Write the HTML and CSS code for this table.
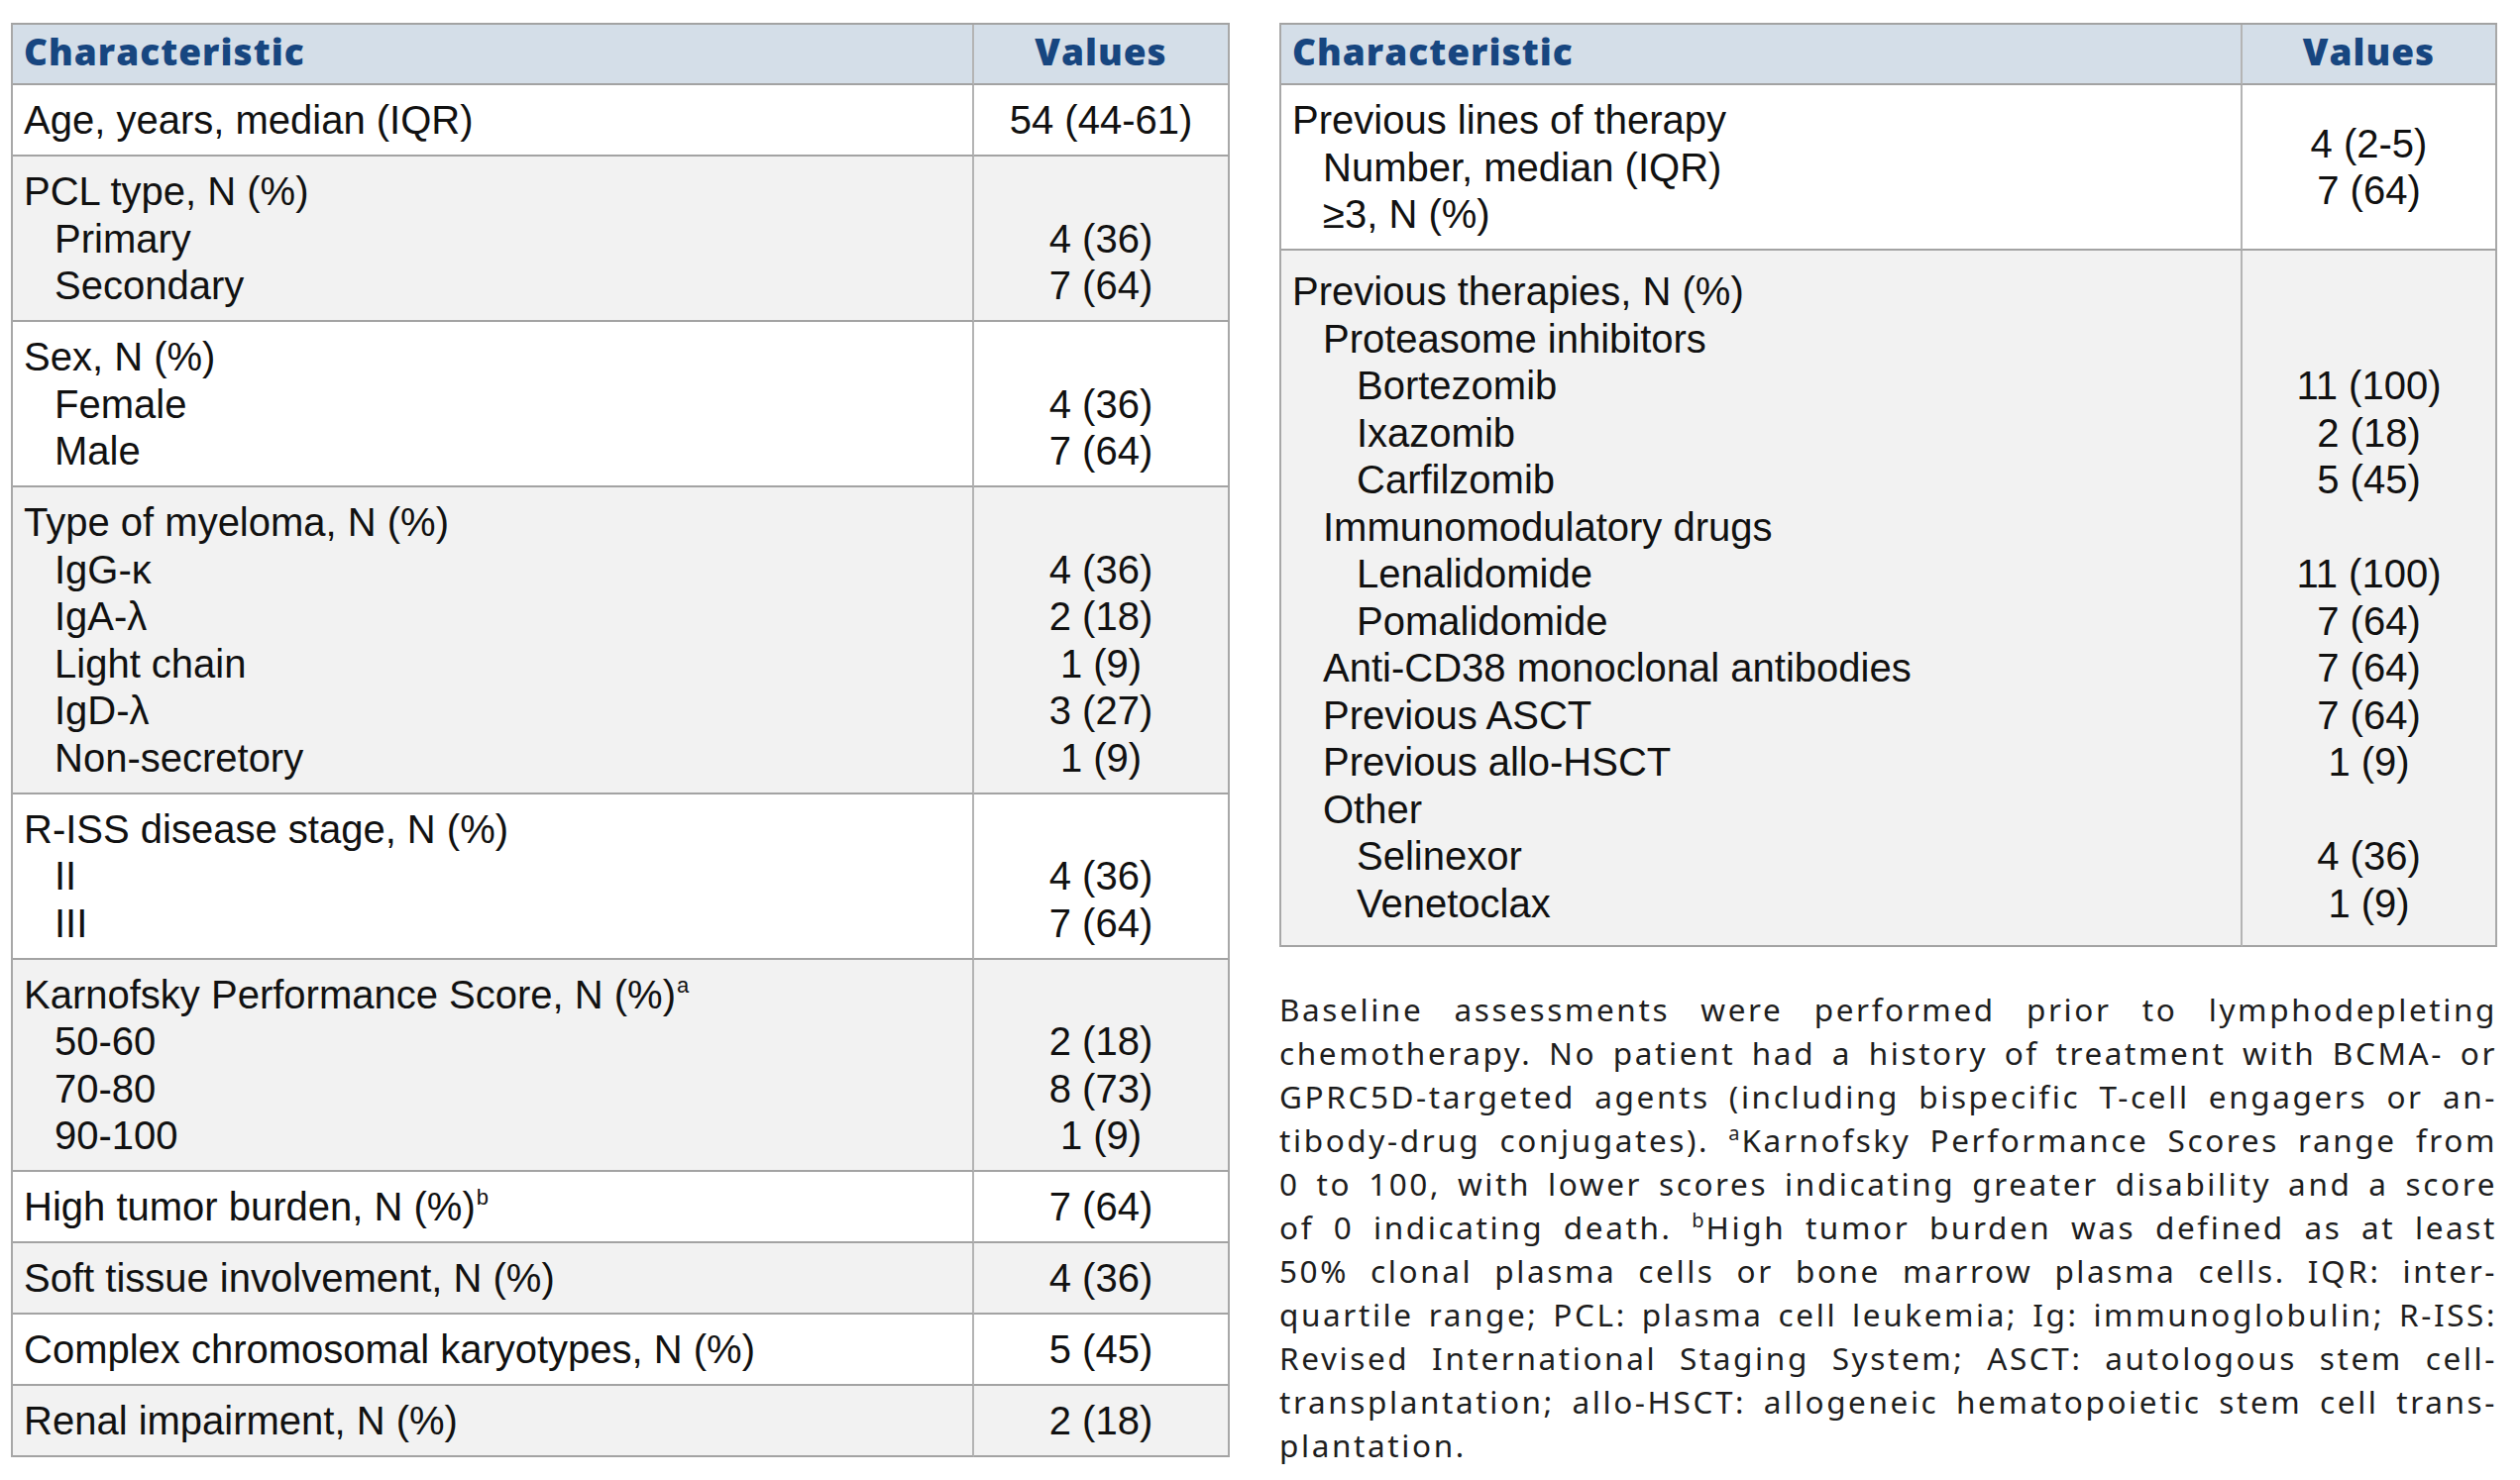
FILE: index.html
```html
<!DOCTYPE html>
<html lang="en">
<head>
<meta charset="utf-8">
<title>Baseline characteristics</title>
<link rel="stylesheet" href="styles.css">
</head>
<body>
<div class="page">
  <table class="tbl">
    <colgroup><col class="c1"><col class="c2"></colgroup>
    <thead>
      <tr><th class="hl">Characteristic</th><th class="hv">Values</th></tr>
    </thead>
    <tbody>
      <tr class="w"><td class="lab"><div>Age, years, median (IQR)</div></td><td class="val"><div>54 (44-61)</div></td></tr>
      <tr class="g"><td class="lab"><div>PCL type, N (%)</div><div class="l1">Primary</div><div class="l1">Secondary</div></td>
        <td class="val"><div>&nbsp;</div><div>4 (36)</div><div>7 (64)</div></td></tr>
      <tr class="w"><td class="lab"><div>Sex, N (%)</div><div class="l1">Female</div><div class="l1">Male</div></td>
        <td class="val"><div>&nbsp;</div><div>4 (36)</div><div>7 (64)</div></td></tr>
      <tr class="g"><td class="lab"><div>Type of myeloma, N (%)</div><div class="l1">IgG-κ</div><div class="l1">IgA-λ</div><div class="l1">Light chain</div><div class="l1">IgD-λ</div><div class="l1">Non-secretory</div></td>
        <td class="val"><div>&nbsp;</div><div>4 (36)</div><div>2 (18)</div><div>1 (9)</div><div>3 (27)</div><div>1 (9)</div></td></tr>
      <tr class="w"><td class="lab"><div>R-ISS disease stage, N (%)</div><div class="l1">II</div><div class="l1">III</div></td>
        <td class="val"><div>&nbsp;</div><div>4 (36)</div><div>7 (64)</div></td></tr>
      <tr class="g"><td class="lab"><div>Karnofsky Performance Score, N (%)<sup class="sp">a</sup></div><div class="l1">50-60</div><div class="l1">70-80</div><div class="l1">90-100</div></td>
        <td class="val"><div>&nbsp;</div><div>2 (18)</div><div>8 (73)</div><div>1 (9)</div></td></tr>
      <tr class="w"><td class="lab"><div>High tumor burden, N (%)<sup class="sp">b</sup></div></td><td class="val"><div>7 (64)</div></td></tr>
      <tr class="g"><td class="lab"><div>Soft tissue involvement, N (%)</div></td><td class="val"><div>4 (36)</div></td></tr>
      <tr class="w"><td class="lab"><div>Complex chromosomal karyotypes, N (%)</div></td><td class="val"><div>5 (45)</div></td></tr>
      <tr class="g"><td class="lab"><div>Renal impairment, N (%)</div></td><td class="val"><div>2 (18)</div></td></tr>
    </tbody>
  </table>

  <div class="right">
    <table class="tbl">
      <colgroup><col class="c1"><col class="c2"></colgroup>
      <thead>
        <tr><th class="hl">Characteristic</th><th class="hv">Values</th></tr>
      </thead>
      <tbody>
        <tr class="w"><td class="lab"><div>Previous lines of therapy</div><div class="l1">Number, median (IQR)</div><div class="l1">≥3, N (%)</div></td>
          <td class="val mid"><div>4 (2-5)</div><div>7 (64)</div></td></tr>
        <tr class="g tall"><td class="lab">
            <div>Previous therapies, N (%)</div>
            <div class="l1">Proteasome inhibitors</div>
            <div class="l2">Bortezomib</div>
            <div class="l2">Ixazomib</div>
            <div class="l2">Carfilzomib</div>
            <div class="l1">Immunomodulatory drugs</div>
            <div class="l2">Lenalidomide</div>
            <div class="l2">Pomalidomide</div>
            <div class="l1">Anti-CD38 monoclonal antibodies</div>
            <div class="l1">Previous ASCT</div>
            <div class="l1">Previous allo-HSCT</div>
            <div class="l1">Other</div>
            <div class="l2">Selinexor</div>
            <div class="l2">Venetoclax</div>
          </td>
          <td class="val">
            <div>&nbsp;</div>
            <div>&nbsp;</div>
            <div>11 (100)</div>
            <div>2 (18)</div>
            <div>5 (45)</div>
            <div>&nbsp;</div>
            <div>11 (100)</div>
            <div>7 (64)</div>
            <div>7 (64)</div>
            <div>7 (64)</div>
            <div>1 (9)</div>
            <div>&nbsp;</div>
            <div>4 (36)</div>
            <div>1 (9)</div>
          </td></tr>
      </tbody>
    </table>

    <div class="note">
      <div class="jl">Baseline assessments were performed prior to lymphodepleting</div>
      <div class="jl">chemotherapy. No patient had a history of treatment with BCMA- or</div>
      <div class="jl">GPRC5D-targeted agents (including bispecific T-cell engagers or an-</div>
      <div class="jl">tibody-drug conjugates). <sup class="nsp">a</sup>Karnofsky Performance Scores range from</div>
      <div class="jl">0 to 100, with lower scores indicating greater disability and a score</div>
      <div class="jl">of 0 indicating death. <sup class="nsp">b</sup>High tumor burden was defined as at least</div>
      <div class="jl">50% clonal plasma cells or bone marrow plasma cells. IQR: inter-</div>
      <div class="jl">quartile range; PCL: plasma cell leukemia; Ig: immunoglobulin; R-ISS:</div>
      <div class="jl">Revised International Staging System; ASCT: autologous stem cell-</div>
      <div class="jl">transplantation; allo-HSCT: allogeneic hematopoietic stem cell trans-</div>
      <div class="ll">plantation.</div>
    </div>
  </div>
</div>
</body>
</html>
```

FILE: styles.css
```css
* { box-sizing: border-box; }

html, body {
  margin: 0;
  padding: 0;
  background: #ffffff;
}

body {
  font-family: "Liberation Sans", Arial, sans-serif;
  color: #111111;
}

.page {
  display: flex;
  align-items: flex-start;
  gap: 50px;
  padding: 23px 0 0 11px;
}

.right {
  width: 1229px;
  display: flex;
  flex-direction: column;
}

.tbl {
  width: 1230px;
  table-layout: fixed;
  border-collapse: separate;
  border-spacing: 0;
  border-top: 2px solid #a3a3a3;
  border-left: 2px solid #a8a8a8;
}

.right .tbl { width: 1229px; }

.c1 { width: 970px; }
.c2 { width: auto; }

.tbl th,
.tbl td {
  border-right: 2px solid #b4b4b4;
  border-bottom: 2px solid #a3a3a3;
  vertical-align: top;
}

.tbl th:last-child,
.tbl td:last-child {
  border-right-color: #a8a8a8;
}

.tbl thead th {
  background: #d4dee8;
  color: #174680;
  font-family: "Open Sans", "Liberation Sans", sans-serif;
  font-weight: 800;
  font-size: 37px;
  letter-spacing: 1px;
  line-height: 47.5px;
  padding: 3px 11px 8.5px;
}

.hl { text-align: left; }
.hv { text-align: center; }

.tbl td {
  font-size: 40px;
  line-height: 47.5px;
  padding: 12px 11px 10.5px;
}

.tbl tr.w td { background: #ffffff; }
.tbl tr.g td { background: #f2f2f2; }

.tbl tr.tall td {
  padding-top: 18px;
  padding-bottom: 18px;
}

.val { text-align: center; }
.val.mid { vertical-align: middle; }

.l1 { padding-left: 31px; }
.l2 { padding-left: 65px; }

.sp {
  font-size: 22px;
  line-height: 0;
  vertical-align: 16px;
  margin-left: 1px;
}

.note {
  margin-top: 41px;
  width: 1229px;
  font-family: "Noto Sans", "Open Sans", sans-serif;
  font-size: 31.5px;
  line-height: 44px;
  letter-spacing: 2.6px;
  color: #1e1e1e;
}

.jl {
  text-align: justify;
  text-align-last: justify;
}

.ll { text-align: left; }

.nsp {
  font-size: 20px;
  line-height: 0;
  vertical-align: 12px;
  letter-spacing: 0;
  margin-right: 2px;
}
```
